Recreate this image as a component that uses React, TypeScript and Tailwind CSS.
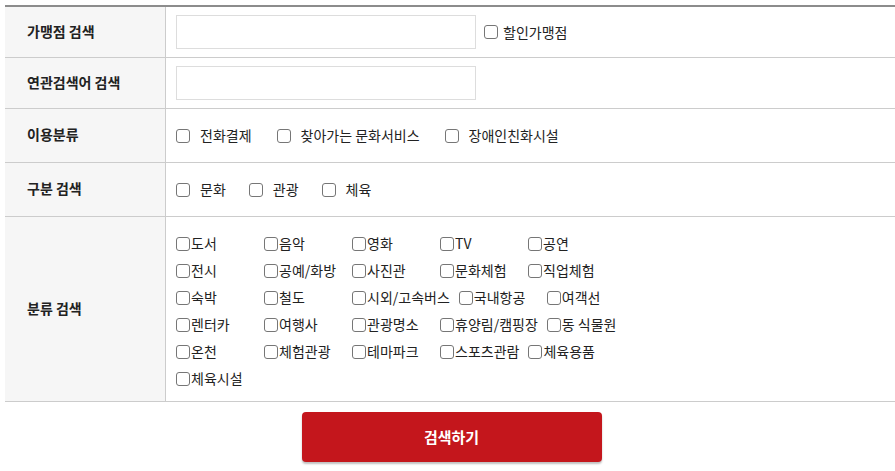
import { ReactNode } from 'react';

const font = { fontFamily: '"Noto Sans CJK KR", "Noto Sans", sans-serif' };

const usage = ['전화결제', '찾아가는 문화서비스', '장애인친화시설'];
const kinds = ['문화', '관광', '체육'];
const cats = [
  '도서', '음악', '영화', 'TV', '공연',
  '전시', '공예/화방', '사진관', '문화체험', '직업체험',
  '숙박', '철도', '시외/고속버스', '국내항공', '여객선',
  '렌터카', '여행사', '관광명소', '휴양림/캠핑장', '동 식물원',
  '온천', '체험관광', '테마파크', '스포츠관람', '체육용품',
  '체육시설',
];

const Box = () => (
  <input
    type="checkbox"
    className="appearance-none m-0 w-[14px] h-[14px] shrink-0 bg-white border border-[#767676] rounded-[3px]"
  />
);

const Row = ({ label, h, children, last }: { label: string; h: string; children: ReactNode; last?: boolean }) => (
  <div className={`flex border-b border-[#cccccc] ${h}`}>
    <div className="w-[161px] shrink-0 bg-[#f6f6f6] border-r border-[#cccccc] flex items-center pl-[22px] pb-[2px] text-[14px] font-bold text-[#222]">
      {label}
    </div>
    <div className={`flex-1 flex ${last ? 'items-start' : 'items-center'} pl-[10px]`}>{children}</div>
  </div>
);

export default function App() {
  return (
    <div className="bg-white w-[895px] h-[471px] pt-[5px] pl-[5px] text-[#222]" style={font}>
      <div className="border-t-2 border-[#8c8c8c]">
        <Row label="가맹점 검색" h="h-[51px]">
          <input className="w-[300px] h-[34px] border border-[#dddddd] outline-none" />
          <label className="flex items-center ml-[8px] text-[14px] gap-[5px]">
            <Box />할인가맹점
          </label>
        </Row>
        <Row label="연관검색어 검색" h="h-[51px]">
          <input className="w-[300px] h-[34px] border border-[#dddddd] outline-none" />
        </Row>
        <Row label="이용분류" h="h-[54px]">
          {usage.map((u) => (
            <label key={u} className="flex items-center text-[14px] gap-[10px] mr-[25px]">
              <Box />{u}
            </label>
          ))}
        </Row>
        <Row label="구분 검색" h="h-[54px]">
          {kinds.map((u) => (
            <label key={u} className="flex items-center text-[14px] gap-[10px] mr-[23px]">
              <Box />{u}
            </label>
          ))}
        </Row>
        <Row label="분류 검색" h="h-[185px]" last>
          <div className="flex flex-wrap w-[480px] pt-[13px]">
            {cats.map((c) => (
              <label key={c} className="flex items-center h-[27px] min-w-[79px] mr-[9px] text-[14px] gap-[1px]">
                <Box />{c}
              </label>
            ))}
          </div>
        </Row>
      </div>
      <div className="flex justify-center pr-[6px] mt-[10px]">
        <button className="w-[300px] h-[50px] rounded-[4px] bg-[#c4161c] text-white font-bold text-[15px] shadow-[0_2px_2px_rgba(0,0,0,0.25)] ml-[9px]">
          검색하기
        </button>
      </div>
    </div>
  );
}
